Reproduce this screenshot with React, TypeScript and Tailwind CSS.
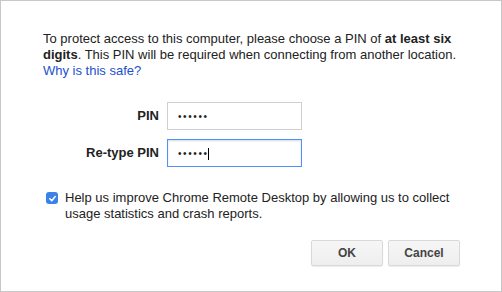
import React from "react";

function Dots({ caret }: { caret?: boolean }) {
  return (
    <span className="flex items-center">
      <span className="text-[10px] tracking-[1.6px] text-[#222] leading-none">••••••</span>
      {caret && <span className="ml-[-1px] h-[12px] w-px bg-black" />}
    </span>
  );
}

export default function App() {
  return (
    <div className="h-[292px] w-[502px] bg-white font-['Liberation_Sans',Arial,sans-serif] text-[13px] text-[#222]">
      <div className="flex h-full flex-col border border-[#c8c8c8] pl-[42px] pr-[40px] pt-[30px]">
        {/* Intro */}
        <p className="leading-[16px]">
          To protect access to this computer, please choose a PIN of <b>at least six digits</b>. This PIN will be
          required when connecting from another location.
          <br />
          <a href="#" className="text-[#1a4fd1]">Why is this safe?</a>
        </p>

        {/* PIN fields */}
        <div className="mt-[23px] grid grid-cols-[116px_135px] items-center gap-x-[8px] gap-y-[9px]">
          <label className="text-right font-bold text-[#222]">PIN</label>
          <div className="flex h-[28px] items-center border border-[#d0d0d0] bg-white pl-[10px] pt-[2px]">
            <Dots />
          </div>
          <label className="text-right font-bold text-[#222]">Re-type PIN</label>
          <div className="flex h-[28px] items-center border border-[#4d90fe] bg-white pl-[10px] pt-[2px] shadow-[inset_0_1px_2px_rgba(0,0,0,0.15)]">
            <Dots caret />
          </div>
        </div>

        {/* Stats checkbox */}
        <div className="mt-[23px] flex items-start gap-[7px] pl-[3px]">
          <span className="mt-[2px] flex h-[12px] w-[12px] shrink-0 items-center justify-center rounded-[3px] bg-[#3b82e8]">
            <svg width="9" height="9" viewBox="0 0 10 10">
              <path d="M2 5.3 L4.2 7.4 L8 2.8" fill="none" stroke="white" strokeWidth="1.7" strokeLinecap="round" strokeLinejoin="round" />
            </svg>
          </span>
          <span className="leading-[16px]">
            Help us improve Chrome Remote Desktop by allowing us to collect usage statistics and crash reports.
          </span>
        </div>

        {/* Buttons */}
        <div className="mt-[18px] flex justify-end gap-[5px] pr-[1px]">
          <button className="h-[26px] w-[72px] rounded-[2px] border border-[#d9d9d9] bg-gradient-to-b from-[#f6f6f6] to-[#eeeeee] text-[12px] font-bold text-[#444] shadow-[0_1px_1px_rgba(0,0,0,0.08)]">
            OK
          </button>
          <button className="h-[26px] w-[72px] rounded-[2px] border border-[#d9d9d9] bg-gradient-to-b from-[#f6f6f6] to-[#eeeeee] text-[12px] font-bold text-[#444] shadow-[0_1px_1px_rgba(0,0,0,0.08)]">
            Cancel
          </button>
        </div>
      </div>
    </div>
  );
}
